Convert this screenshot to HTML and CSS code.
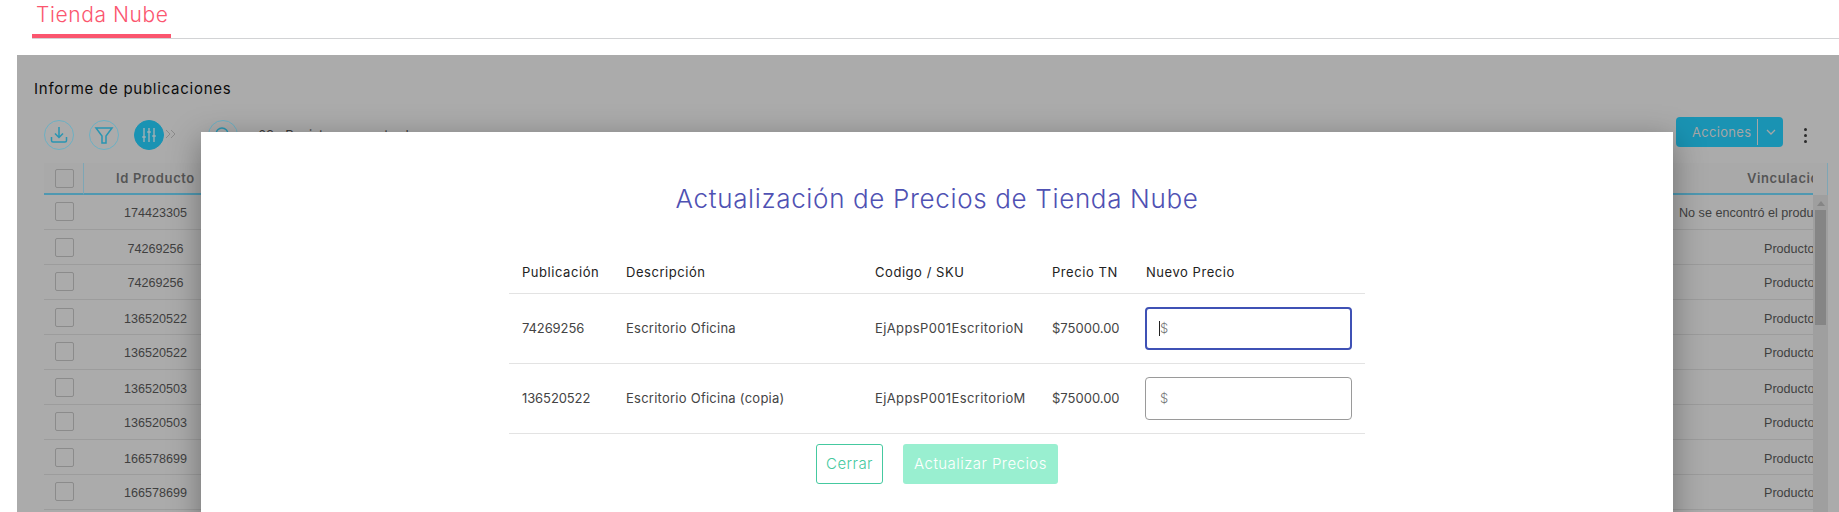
FILE: index.html
```html
<!DOCTYPE html>
<html>

<head>
    <title>Tienda Nube</title>
    <link rel="stylesheet" href="styles.css">
</head>

<body>
    <div class="tabs">
        <div class="tab">Tienda Nube</div>
    </div>

    <div class="panel">
        <h2 class="panel-title">Informe de publicaciones</h2>

        <div class="toolbar">
            <button class="round-btn">
                <svg width="20" height="20" viewBox="0 0 20 20">
                    <path d="M10 2v10M6 8.5l4 4 4-4M2.5 12v3.5q0 1.5 1.5 1.5h12q1.500 0 1.500-1.500V12" />
                </svg>
            </button>
            <button class="round-btn">
                <svg width="20" height="20" viewBox="0 0 20 20">
                    <path d="M2 3h16l-6 8v7h-4v-7z" />
                </svg>
            </button>
            <button class="round-btn round-btn-active">
                <svg width="20" height="20" viewBox="0 0 20 20">
                    <path d="M5 3v14M10 3v14M15 3v14M3 12h4M8 7h4M13 11h4" />
                </svg>
            </button>
            <svg class="more-arrows" width="11" height="10" viewBox="0 0 11 10">
                <path d="M1 1l4 4-4 4M6 1l4 4-4 4" />
            </svg>
            <button class="round-btn search-btn">
                <svg width="20" height="20" viewBox="0 0 20 20">
                    <circle cx="9" cy="9" r="6" />
                    <path d="M13.500 13.500L18 18" />
                </svg>
            </button>
            <span class="result-count">68 · Registros encontrados</span>

            <div class="actions">
                <span class="actions-label">Acciones</span>
                <span class="actions-caret">
                    <svg width="10" height="6" viewBox="0 0 10 6">
                        <path d="M1 1l4 4 4-4" />
                    </svg>
                </span>
            </div>
            <div class="kebab"><i></i><i></i><i></i></div>
        </div>

        <div class="grid">
            <div class="grid-head">
                <div class="cell-check"><span class="check"></span></div>
                <div class="cell-id">Id Producto</div>
                <div class="cell-fill"></div>
                <div class="cell-link">Vinculación</div>
            </div>
            <div class="grid-body">
                <div class="grid-rows">
                    <div class="grid-row">
                        <div class="cell-check"><span class="check"></span></div>
                        <div class="cell-id">174423305</div>
                        <div class="cell-fill"></div>
                        <div class="cell-link link-missing">No se encontró el producto</div>
                    </div>
                    <div class="grid-row">
                        <div class="cell-check"><span class="check"></span></div>
                        <div class="cell-id">74269256</div>
                        <div class="cell-fill"></div>
                        <div class="cell-link link-found">Producto vinculado</div>
                    </div>
                    <div class="grid-row">
                        <div class="cell-check"><span class="check"></span></div>
                        <div class="cell-id">74269256</div>
                        <div class="cell-fill"></div>
                        <div class="cell-link link-found">Producto vinculado</div>
                    </div>
                    <div class="grid-row">
                        <div class="cell-check"><span class="check"></span></div>
                        <div class="cell-id">136520522</div>
                        <div class="cell-fill"></div>
                        <div class="cell-link link-found">Producto vinculado</div>
                    </div>
                    <div class="grid-row">
                        <div class="cell-check"><span class="check"></span></div>
                        <div class="cell-id">136520522</div>
                        <div class="cell-fill"></div>
                        <div class="cell-link link-found">Producto vinculado</div>
                    </div>
                    <div class="grid-row">
                        <div class="cell-check"><span class="check"></span></div>
                        <div class="cell-id">136520503</div>
                        <div class="cell-fill"></div>
                        <div class="cell-link link-found">Producto vinculado</div>
                    </div>
                    <div class="grid-row">
                        <div class="cell-check"><span class="check"></span></div>
                        <div class="cell-id">136520503</div>
                        <div class="cell-fill"></div>
                        <div class="cell-link link-found">Producto vinculado</div>
                    </div>
                    <div class="grid-row">
                        <div class="cell-check"><span class="check"></span></div>
                        <div class="cell-id">166578699</div>
                        <div class="cell-fill"></div>
                        <div class="cell-link link-found">Producto vinculado</div>
                    </div>
                    <div class="grid-row">
                        <div class="cell-check"><span class="check"></span></div>
                        <div class="cell-id">166578699</div>
                        <div class="cell-fill"></div>
                        <div class="cell-link link-found">Producto vinculado</div>
                    </div>
                </div>
                <div class="scrollbar">
                    <div class="scroll-arrow"></div>
                    <div class="scroll-thumb"></div>
                </div>
            </div>
        </div>

        <div class="modal">
            <h1 class="modal-title">Actualización de Precios de Tienda Nube</h1>
            <table class="price-table">
                <thead>
                    <tr>
                        <th class="col-pub">Publicación</th>
                        <th class="col-desc">Descripción</th>
                        <th class="col-sku">Codigo / SKU</th>
                        <th class="col-price">Precio TN</th>
                        <th class="col-new">Nuevo Precio</th>
                    </tr>
                </thead>
                <tbody>
                    <tr>
                        <td class="td-number">74269256</td>
                        <td>Escritorio Oficina</td>
                        <td class="td-sku">EjAppsP001EscritorioN</td>
                        <td class="td-money">$75000.00</td>
                        <td class="td-input">
                            <span class="input-wrap">
                                <input class="price-input" type="text" placeholder="$" autofocus />
                                <i class="text-caret"></i>
                            </span>
                        </td>
                    </tr>
                    <tr>
                        <td class="td-number">136520522</td>
                        <td>Escritorio Oficina (copia)</td>
                        <td class="td-sku">EjAppsP001EscritorioM</td>
                        <td class="td-money">$75000.00</td>
                        <td class="td-input">
                            <span class="input-wrap">
                                <input class="price-input" type="text" placeholder="$" />
                            </span>
                        </td>
                    </tr>
                </tbody>
            </table>
            <div class="modal-buttons">
                <button class="btn-close">Cerrar</button>
                <button class="btn-update">Actualizar Precios</button>
            </div>
        </div>
    </div>
</body>

</html>
```

FILE: styles.css
```css
html,
body {
    height: 512px;
    overflow: hidden;
}

body {
    margin: 0;
    background-color: #fff;
    font-family: Inter, "Open Sans", sans-serif;
}

.tabs {
    display: flex;
    margin-left: 32px;
    height: 38px;
    border-bottom: 1px solid #d2d3d5;
}

.tab {
    box-sizing: border-box;
    width: 139px;
    height: 38px;
    padding: 3px 0 0 4px;
    border-bottom: 4px solid #fb566f;
    color: #fb566f;
    font-size: 21px;
    font-weight: 300;
    letter-spacing: 0.6px;
    line-height: 24px;
}

.panel {
    position: relative;
    box-sizing: border-box;
    height: 457px;
    margin: 16px 0 0 17px;
    padding: 24px 0 0 0;
    overflow: hidden;
    background-color: #ababab;
}

.panel-title {
    margin: 0 0 18px 17px;
    color: #0c0c0c;
    font-size: 15px;
    font-weight: 400;
    line-height: 20px;
    letter-spacing: 0.75px;
}

.toolbar {
    display: flex;
    align-items: flex-start;
    height: 33px;
    padding-left: 27px;
}

.round-btn {
    display: flex;
    align-items: center;
    justify-content: center;
    box-sizing: border-box;
    width: 30px;
    height: 30px;
    margin: 3px 15px 0 0;
    padding: 0;
    border: 1px solid #6db0c3;
    border-radius: 50%;
    background: none;
}

.round-btn svg path,
.round-btn svg circle {
    fill: none;
    stroke: #2a95b2;
    stroke-width: 1.500;
}

.round-btn-active {
    margin-right: 0;
    border-color: #1a93b3;
    background-color: #1a93b3;
}

.round-btn-active svg path {
    stroke: #b5b5b5;
    stroke-width: 1.200;
}

.more-arrows {
    margin: 12px 32px 0 1px;
}

.more-arrows path {
    fill: none;
    stroke: #8a8a8a;
    stroke-width: 1;
}

.search-btn {
    margin-right: 20px;
}

.result-count {
    margin-top: 3px;
    color: #3a3a3a;
    font-size: 13px;
    line-height: 30px;
}

.actions {
    display: flex;
    align-items: stretch;
    box-sizing: border-box;
    width: 107px;
    height: 30px;
    margin-left: auto;
    border-radius: 4px;
    background-color: #1a93b3;
}

.actions-label {
    width: 81px;
    padding-left: 16px;
    box-sizing: border-box;
    color: #a6a6a6;
    font-size: 13px;
    line-height: 30px;
    letter-spacing: 0.3px;
}

.actions-caret {
    display: flex;
    align-items: center;
    justify-content: center;
    flex: 1;
    margin: 2px 0;
    border-left: 1px solid #a6a6a6;
}

.actions-caret path {
    fill: none;
    stroke: #a6a6a6;
    stroke-width: 1.300;
}

.kebab {
    display: flex;
    flex-direction: column;
    gap: 3px;
    width: 3px;
    margin: 11px 32px 0 21px;
}

.kebab i {
    width: 3px;
    height: 3px;
    border-radius: 50%;
    background-color: #2b2b2b;
}

.grid {
    width: 1784px;
    margin: 13px 0 0 27px;
    color: #3f3f3f;
    font-family: "Liberation Sans", Arial, sans-serif;
    font-size: 12.6px;
}

.grid-head {
    display: flex;
    box-sizing: border-box;
    height: 32px;
    padding-right: 14px;
    border-right: 1px solid #7ea6b5;
    background-color: #a9a9a9;
    color: #555;
    font-family: Inter, sans-serif;
    font-size: 13px;
    font-weight: 600;
    letter-spacing: 0.6px;
}

.grid-head > div {
    display: flex;
    align-items: center;
    border-bottom: 2px solid #4f98b1;
}

.grid-head .cell-id {
    justify-content: center;
}

.grid-head .cell-check {
    border-right: 1px solid #7ea6b5;
}

.grid-head .cell-link {
    box-sizing: border-box;
    width: 140px;
    padding-left: 74px;
}

.grid-body {
    display: flex;
}

.grid-rows {
    width: 1769px;
}

.grid-row {
    display: flex;
    align-items: center;
    box-sizing: border-box;
    height: 35px;
    padding-bottom: 1px;
    border-bottom: 1px solid #9c9c9c;
}

.grid-row:nth-child(even) {
    padding-top: 1px;
    padding-bottom: 0;
}

.grid-row .cell-id,
.grid-row .cell-link {
    margin-top: 2px;
}

.cell-check {
    display: flex;
    align-items: center;
    box-sizing: border-box;
    width: 40px;
    height: 100%;
    padding-left: 11px;
}

.check {
    box-sizing: border-box;
    width: 19px;
    height: 19px;
    border: 1px solid #8b8b8b;
    border-radius: 2px;
}

.cell-id {
    display: flex;
    justify-content: center;
    width: 143px;
}

.cell-fill {
    flex: 1;
    height: 100%;
}

.cell-link {
    flex: none;
    overflow: hidden;
    white-space: nowrap;
}

.grid-row .link-missing {
    width: 134px;
    padding-left: 6px;
}

.grid-row .link-found {
    width: 49px;
    padding-left: 91px;
}

.scrollbar {
    width: 15px;
    height: 400px;
    background-color: #9f9f9f;
}

.scroll-arrow {
    width: 0;
    margin: 6px auto 0;
    border: 4px solid transparent;
    border-top: 0;
    border-bottom: 5px solid #858585;
}

.scroll-thumb {
    width: 11px;
    height: 115px;
    margin: 4px auto 0;
    background-color: #858585;
}

.modal {
    position: absolute;
    left: 184px;
    top: 77px;
    width: 1472px;
    height: 420px;
    background-color: #fff;
    box-shadow: 0 8px 30px rgba(0, 0, 0, 0.35);
}

.modal-title {
    margin: 47px 0 31px;
    color: #4f51b3;
    font-size: 26px;
    font-weight: 300;
    line-height: 40px;
    text-align: center;
    letter-spacing: 0.65px;
}

.price-table {
    width: 856px;
    margin: 0 auto;
    border-collapse: collapse;
    table-layout: fixed;
    color: #444;
    font-size: 13px;
    letter-spacing: 0.25px;
}

.price-table th {
    box-sizing: border-box;
    height: 43px;
    padding: 2px 0 0 13px;
    border-bottom: 1px solid #e3e3e3;
    color: #222;
    font-weight: 400;
    letter-spacing: 0.55px;
    text-align: left;
}

.price-table td {
    height: 70px;
    box-sizing: border-box;
    padding: 0 0 0 13px;
    border-bottom: 1px solid #e3e3e3;
    white-space: nowrap;
}

.price-table .td-number {
    letter-spacing: -0.1px;
}

.price-table .td-sku {
    letter-spacing: 0.38px;
}

.price-table .td-money {
    letter-spacing: 0;
}

.price-table .td-input {
    padding-left: 12px;
}

.col-pub {
    width: 104px;
}

.col-desc {
    width: 249px;
}

.col-sku {
    width: 177px;
}

.col-price {
    width: 94px;
}

.col-new {
    width: 232px;
}

.input-wrap {
    position: relative;
    display: block;
    width: 207px;
}

.price-input {
    box-sizing: border-box;
    display: block;
    width: 207px;
    height: 43px;
    padding: 0 14px;
    border: 1px solid #9a9a9a;
    border-radius: 4px;
    color: #222;
    font-family: Inter, sans-serif;
    font-size: 13px;
    font-weight: 300;
}

.price-input:focus {
    padding: 0 13px;
    border: 2px solid #3f51b5;
    outline: none;
}

.price-input::placeholder {
    color: #777;
}

.text-caret {
    position: absolute;
    left: 14px;
    top: 14px;
    width: 1px;
    height: 15px;
    background-color: #222;
}

.modal-buttons {
    display: flex;
    justify-content: center;
    gap: 20px;
    margin-top: 10px;
}

.modal-buttons button {
    box-sizing: border-box;
    height: 40px;
    padding: 0;
    border-radius: 3px;
    font-family: Inter, sans-serif;
    font-size: 15px;
    font-weight: 300;
    letter-spacing: 0.45px;
}

.btn-close {
    width: 67px;
    border: 1px solid #45c9a0;
    background-color: #fff;
    color: #45c9a0;
}

.btn-update {
    width: 155px;
    border: none;
    background-color: #99efd0;
    color: #fff;
}
```
